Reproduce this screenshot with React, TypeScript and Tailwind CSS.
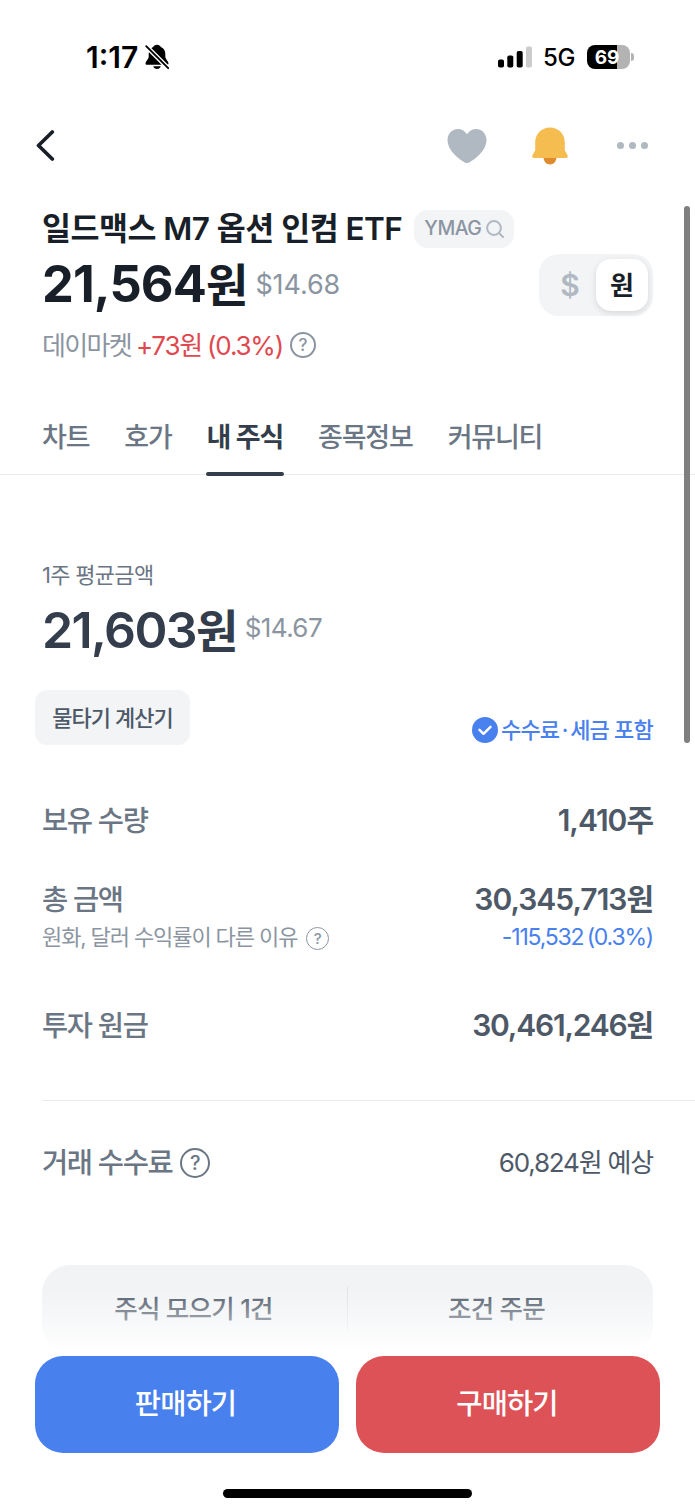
import clsx from "clsx";
import type { ReactNode } from "react";

const tabs = ["차트", "호가", "내 주식", "종목정보", "커뮤니티"];

function HelpIcon({ className }: { className: string }) {
  return (
    <span
      className={clsx(
        "inline-flex shrink-0 items-center justify-center rounded-full font-medium leading-none tracking-normal",
        className,
      )}
    >
      ?
    </span>
  );
}

function StatusBar() {
  return (
    <div className="flex h-[114px] items-center pl-[86px] pr-[61px] text-black">
      <span className="w-[59px] text-[30px] font-semibold leading-none tracking-[0px]">1:17</span>
      <svg width="26" height="26" viewBox="0 0 26 26" className="-ml-px">
        <path
          d="M13 .8c-2 0-3.300 1-3.900 2.300C6 4.300 4.700 7 4.700 10v2.800C4.700 15 1.500 17.500 1.500 19.400c0 .9.600 1.400 1.600 1.400h19.800c1 0 1.600-.5 1.600-1.400 0-1.900-3.200-4.400-3.200-6.600V10c0-3-1.300-5.700-4.400-6.900C16.300 1.800 15 .8 13 .8Z"
          fill="#000"
        />
        <path d="M9.300 22.200h7.400c-.5 1.800-1.800 2.800-3.700 2.800s-3.200-1-3.700-2.800Z" fill="#000" />
        <path d="M1 1l25 25" stroke="#fff" strokeWidth="4.600" />
        <path d="M2.200 2.200l22 22" stroke="#000" strokeWidth="1.900" strokeLinecap="round" />
      </svg>
      <svg width="34" height="22" viewBox="0 0 34 22" className="ml-auto">
        <rect x="0" y="13.500" width="6" height="8" rx="1.800" fill="#000" />
        <rect x="9.300" y="9.500" width="6" height="12" rx="1.800" fill="#000" />
        <rect x="18.700" y="5" width="6" height="16.500" rx="1.800" fill="#000" />
        <rect x="28" y="0.500" width="6" height="21" rx="1.800" fill="#ccc" />
      </svg>
      <span className="ml-[11px] pt-px text-[24px] font-medium leading-none tracking-[-0.4px]">5G</span>
      <div className="ml-[12px] flex h-6 w-[43px] items-center justify-center rounded-[8px] bg-linear-to-r from-black from-70% to-[#b3b3b3] to-70% pr-[3px] text-[19px] font-bold leading-none text-white">
        69
      </div>
      <div className="ml-[1px] h-2 w-[3px] rounded-r-full bg-[#b3b3b3]" />
    </div>
  );
}

function NavBar() {
  return (
    <div className="mb-[2px] flex h-[62px] items-center pl-[36px] pr-[47px]">
      <svg width="20" height="32" viewBox="0 0 20 32" fill="none">
        <path d="M16.300 3L2.500 16.500l13.800 13.500" stroke="#191f28" strokeWidth="3.700" strokeLinecap="round" strokeLinejoin="round" />
      </svg>
      <svg width="40" height="36" viewBox="0 0 40 36" className="ml-auto mt-px">
        <path
          d="M20 6.300C17.600 2.800 14.500 1 11 1 5.300 1 .5 5.600.5 12.200c0 9.800 10.300 18.200 17.300 22.300 1.500.8 2.900.8 4.400 0 7-4.100 17.300-12.500 17.300-22.300C39.500 5.600 34.700 1 29 1c-3.500 0-6.600 1.800-9 5.300Z"
          fill="#b0b8c1"
        />
      </svg>
      <svg width="36" height="38" viewBox="0 0 36 38" className="ml-[45px] mt-px">
        <path d="M11.500 30h13c0 4.500-2.800 7.500-6.500 7.500s-6.500-3-6.500-7.500Z" fill="#de8a2d" />
        <path
          d="M18 .5C9.600.5 3.200 7 3.200 15.400v7.800L.6 28c-.9 1.600-.2 3 1.500 3h31.800c1.700 0 2.400-1.400 1.500-3l-2.600-4.800v-7.800C32.800 7 26.400.5 18 .5Z"
          fill="#f5bd4f"
        />
      </svg>
      <div className="ml-[49px] flex gap-[5px]">
        <span className="size-[7px] rounded-full bg-[#b0b8c1]" />
        <span className="size-[7px] rounded-full bg-[#b0b8c1]" />
        <span className="size-[7px] rounded-full bg-[#b0b8c1]" />
      </div>
    </div>
  );
}

function StockHeader() {
  return (
    <section className="px-[42px] pt-[31px]">
      <div className="flex h-[39px] items-center">
        <h1 className="whitespace-nowrap text-[31.500px] font-semibold leading-none tracking-[-0.520px] text-[#191f28]">
          일드맥스 M7 옵션 인컴 ETF
        </h1>
        <div className="ml-3 flex h-[38px] w-[100px] items-center justify-center gap-[5px] rounded-[14px] bg-[#f2f4f6] text-[19.500px] font-medium leading-none tracking-[-0.5px] text-[#8b95a1]">
          <span className="pt-px">YMAG</span>
          <svg width="18" height="18" viewBox="0 0 18 18" fill="none" stroke="#b0b8c1" strokeWidth="2" strokeLinecap="round">
            <circle cx="8" cy="8" r="6.900" />
            <path d="M13 13l4 4" />
          </svg>
        </div>
      </div>

      <div className="mt-[6px] flex h-[62px] items-center">
        <span className="pb-[2px] text-[50.500px] font-bold leading-none tracking-[-0.9px] text-[#191f28]">
          21,564<span className="text-[46px]">원</span>
        </span>
        <span className="ml-[8px] pb-px text-[27px] leading-none tracking-[-0.1px] text-[#8b95a1]">$14.68</span>
        <div className="ml-auto flex h-[62px] w-[114px] items-center rounded-[20px] bg-[#f2f4f6] p-[5px] leading-none">
          <span className="flex-1 text-center text-[30px] font-semibold text-[#b0b8c1]">$</span>
          <span className="flex size-[52px] items-center justify-center rounded-[15px] bg-white pt-px text-[26px] font-semibold text-[#191f28] shadow-[0_2px_6px_rgba(0,0,0,0.12)]">
            원
          </span>
        </div>
      </div>

      <div className="mt-[14px] flex h-[30px] items-center text-[26px] leading-none">
        <span className="pt-px tracking-[-1.700px] text-[#8b95a1]">데이마켓</span>
        <span className="ml-[5px] pt-px tracking-[-1.200px] text-[#e0484f] [word-spacing:-1px]">+73원 (0.3%)</span>
        <HelpIcon className="ml-[7px] size-[26px] border-2 border-[#8b95a1] text-[17px] text-[#8b95a1]" />
      </div>
    </section>
  );
}

function TabBar() {
  return (
    <nav className="mt-[38px] flex h-[77px] gap-[35px] border-b border-[#e9ebee] pl-[42px] text-[27px] leading-none tracking-[-1.200px]">
      {tabs.map((tab) => (
        <span
          key={tab}
          className={clsx(
            "relative flex items-center whitespace-nowrap pt-[2px]",
            tab === "내 주식" ? "font-semibold text-[#333d4b]" : "font-medium text-[#6b7684]",
          )}
        >
          {tab}
          {tab === "내 주식" && (
            <span className="absolute -inset-x-px bottom-[-2px] h-1 rounded-full bg-[#333d4b]" />
          )}
        </span>
      ))}
    </nav>
  );
}

function Row({ label, className, children }: { label: ReactNode; className: string; children: ReactNode }) {
  return (
    <div className={clsx("flex h-10 items-center justify-between leading-none", className)}>
      <span className="flex items-center pt-[2px] text-[28.500px] font-medium tracking-[-1.400px] text-[#6b7684]">
        {label}
      </span>
      {children}
    </div>
  );
}

function Holdings() {
  return (
    <section className="px-[42px] pt-[85px]">
      <p className="h-[30px] text-[22px] leading-[30px] tracking-[-0.700px] text-[#6b7684]">1주 평균금액</p>
      <div className="mt-[11px] flex h-[60px] items-center">
        <span className="pb-[2px] text-[50px] font-semibold leading-none tracking-[-1.600px] text-[#333d4b]">
          21,603<span className="text-[46px]">원</span>
        </span>
        <span className="ml-[8px] pb-1.5 text-[26px] leading-none tracking-[-0.600px] text-[#8b95a1]">$14.67</span>
      </div>

      <div className="mt-[29px] flex h-[55px] items-center justify-between">
        <button className="-ml-[7px] h-[55px] w-[155px] rounded-[12px] bg-[#f2f4f6] text-[22px] font-medium leading-none tracking-[-1px] text-[#4e5968]">
          물타기 계산기
        </button>
        <span className="flex items-center pt-[24px] text-[22px] font-medium leading-none tracking-[-0.8px] text-[#4880ee]">
          <svg width="26" height="26" viewBox="0 0 26 26" fill="none" className="mr-[3px]">
            <circle cx="13" cy="13" r="13" fill="#4880ee" />
            <path d="M7.500 12.800l4 4 7-7" stroke="#fff" strokeWidth="2.400" strokeLinecap="round" strokeLinejoin="round" />
          </svg>
          수수료<span className="mx-[2.500px]">·</span>세금 포함
        </span>
      </div>

      <Row label="보유 수량" className="mt-[55px]">
        <span className="text-[30px] font-semibold tracking-[-1px] text-[#4e5968]">1,410주</span>
      </Row>
      <Row label="총 금액" className="mt-[39px]">
        <span className="text-[30px] font-semibold tracking-[-1px] text-[#4e5968]">30,345,713원</span>
      </Row>
      <div className="mt-[3px] flex h-[30px] items-center justify-between leading-none">
        <span className="flex items-center text-[22px] tracking-[-1.100px] text-[#8b95a1]">
          원화, 달러 수익률이 다른 이유
          <HelpIcon className="ml-[9px] mt-[2px] size-[23px] border-[1.500px] border-[#8b95a1] text-[15px]" />
        </span>
        <span className="text-[23px] tracking-[-1.200px] text-[#4880ee] [word-spacing:-2px]">-115,532 (0.3%)</span>
      </div>
      <Row label="투자 원금" className="mt-[53px]">
        <span className="text-[30px] font-semibold tracking-[-1.200px] text-[#4e5968]">30,461,246원</span>
      </Row>

      <div className="-mr-[42px] mt-[55px] h-px bg-[#e9ebee]" />

      <Row
        label={
          <>
            거래 수수료
            <HelpIcon className="ml-[8px] size-[30px] border-[2.500px] border-[#6b7684] text-[20px]" />
          </>
        }
        className="mt-[41px]"
      >
        <span className="pt-[2px] text-[26px] tracking-[-1.200px] text-[#4e5968]">60,824원 예상</span>
      </Row>
    </section>
  );
}

function OrderShortcuts() {
  return (
    <div className="relative mx-[42px] mt-[83px] grid h-[88px] grid-cols-[1fr_1px_1fr] items-center rounded-[28px] bg-[#f1f3f5] text-[25.500px] font-medium leading-none tracking-[-0.7px] text-[#4e5968]">
      <span className="pr-[2px] text-center">주식 모으기 1건</span>
      <span className="h-[44px] bg-[#dfe2e6]" />
      <span className="pr-[8px] text-center">조건 주문</span>
      {/* fade into the fixed bottom bar */}
      <div className="absolute -inset-x-1 bottom-0 top-[24px] bg-linear-to-b from-white/0 via-white/45 via-50% to-white to-95%" />
    </div>
  );
}

function BottomBar() {
  return (
    <div className="mt-[3px] flex flex-col items-center">
      <div className="grid w-full grid-cols-2 gap-[17px] px-[35px] text-[28.500px] font-medium leading-none tracking-[-0.9px] text-white">
        <button className="h-[97px] rounded-[28px] bg-[#4880ee] pr-[3px]">판매하기</button>
        <button className="h-[97px] rounded-[28px] bg-[#dd5257] pr-[2px]">구매하기</button>
      </div>
      <div className="mt-[36px] h-[9px] w-[249px] rounded-full bg-black" />
    </div>
  );
}

export default function App() {
  return (
    <main className="relative h-[1512px] w-[695px] overflow-hidden bg-white font-['Inter','Noto_Sans_CJK_KR',sans-serif]">
      <StatusBar />
      <NavBar />
      <StockHeader />
      <TabBar />
      <Holdings />
      <OrderShortcuts />
      <BottomBar />
      {/* scroll indicator */}
      <div className="absolute right-[5px] top-[206px] h-[537px] w-[6px] rounded-full bg-[#7f7f7f]" />
    </main>
  );
}
